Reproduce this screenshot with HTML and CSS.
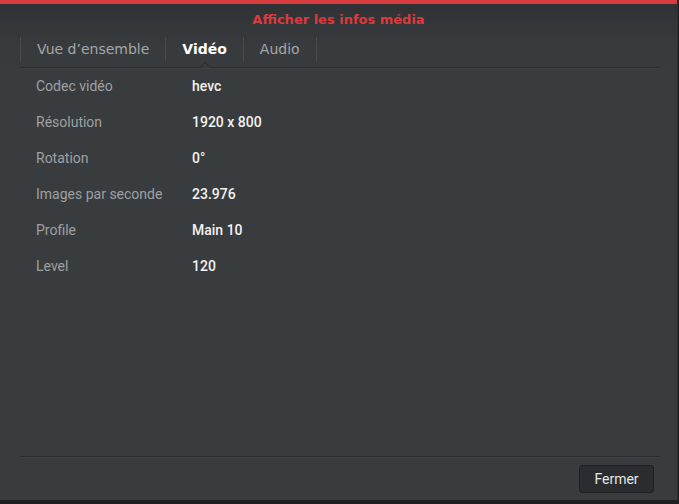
FILE: index.html
```html
<!DOCTYPE html>
<html lang="fr">
<head>
<meta charset="utf-8">
<link rel="stylesheet" href="styles.css">
</head>
<body>
<div class="dialog">
  <div class="topbar"></div>
  <div class="title">Afficher les infos média</div>
  <div class="tabs">
    <div class="tab">Vue d’ensemble</div>
    <div class="tab active">Vidéo</div>
    <div class="tab">Audio</div>
  </div>
  <div class="content">
    <div class="row"><div class="label">Codec vidéo</div><div class="value">hevc</div></div>
    <div class="row"><div class="label">Résolution</div><div class="value">1920 x 800</div></div>
    <div class="row"><div class="label">Rotation</div><div class="value">0°</div></div>
    <div class="row"><div class="label">Images par seconde</div><div class="value">23.976</div></div>
    <div class="row"><div class="label">Profile</div><div class="value">Main 10</div></div>
    <div class="row"><div class="label">Level</div><div class="value">120</div></div>
  </div>
  <div class="footer">
    <button class="btn">Fermer</button>
  </div>
</div>
</body>
</html>
```
FILE: styles.css
```css
html, body {
  margin: 0;
  padding: 0;
  background: #1e1f21;
}
.dialog {
  width: 678px;
  height: 500px;
  background: linear-gradient(to bottom, #2e3033 0px, #383b3e 45px, #393c3f 70px, #393c3f 100%);
  border-right: 1px solid #2c2e30;
  display: flex;
  flex-direction: column;
  box-sizing: border-box;
}
.topbar {
  height: 4px;
  background: #d83c3e;
  flex: none;
}
.title {
  height: 27px;
  line-height: 31px;
  text-align: center;
  font-family: "DejaVu Sans", sans-serif;
  font-weight: bold;
  font-size: 13px;
  color: #dc3a3c;
  flex: none;
}
.tabs {
  margin: 6px 18px 0 20px;
  display: flex;
  height: 30px;
  border-bottom: 1px solid #2b2d2f;
  box-shadow: 0 1px 0 #3e4245;
  flex: none;
}
.tab {
  position: relative;
  height: 24px;
  line-height: 24px;
  padding: 0 16px 0 16px;
  border-left: 1px solid #4a4d50;
  font-family: "DejaVu Sans", sans-serif;
  font-size: 14px;
  color: #a4a6a8;
}
.tab:last-child {
  border-right: 1px solid #4a4d50;
}
.tab.active {
  color: #ffffff;
  font-weight: bold;
}
.tab.active::after {
  content: "";
  position: absolute;
  left: 50%;
  bottom: -7px;
  margin-left: -6px;
  width: 0;
  height: 0;
  border-left: 6px solid transparent;
  border-right: 6px solid transparent;
  border-bottom: 6px solid #2b2d2f;
}
.tab.active::before {
  content: "";
  position: absolute;
  left: 50%;
  bottom: -7px;
  margin-left: -5px;
  width: 0;
  height: 0;
  border-left: 5px solid transparent;
  border-right: 5px solid transparent;
  border-bottom: 5px solid #393c3f;
  z-index: 1;
}
.content {
  flex: 1;
  padding: 0 0 0 16px;
  margin: 0 18px 0 20px;
  border-bottom: 1px solid #2b2d2f;
  box-shadow: 0 1px 0 #3e4245;
}
.row {
  display: flex;
  height: 36px;
  align-items: center;
  font-family: Roboto, sans-serif;
  font-size: 14px;
}
.label {
  width: 156px;
  color: #9ea0a2;
}
.value {
  color: #f2f2f2;
  font-weight: 500;
}
.footer {
  flex: none;
  height: 43px;
  display: flex;
  justify-content: flex-end;
  align-items: flex-start;
  padding: 8px 23px 0 0;
  box-sizing: border-box;
}
.btn {
  width: 75px;
  height: 28px;
  background: #2a2c2f;
  border: 1px solid #1d1f21;
  border-radius: 3px;
  color: #e6e6e6;
  font-family: Roboto, sans-serif;
  font-size: 14px;
  padding: 0;
}
```
